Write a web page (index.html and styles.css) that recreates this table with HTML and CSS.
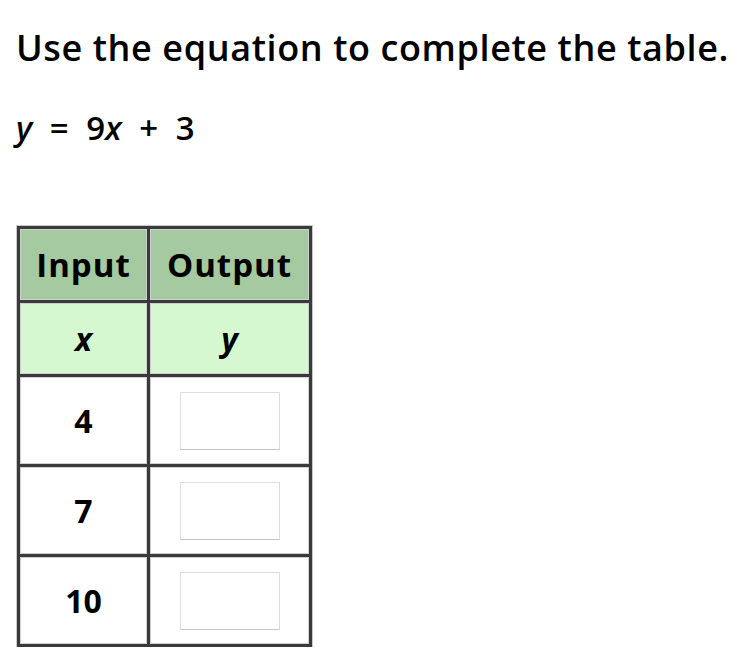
FILE: index.html
```html
<!DOCTYPE html>
<html>
<head>
<meta charset="utf-8">
<link rel="stylesheet" href="styles.css">
</head>
<body>
<div class="page">
  <p class="prompt">Use the equation to complete the table.</p>
  <p class="equation"><i>y</i> = 9<i>x</i> + 3</p>
  <table class="tbl">
    <tr class="head"><td class="c1">Input</td><td class="c2">Output</td></tr>
    <tr class="vars"><td><i>x</i></td><td><i>y</i></td></tr>
    <tr class="data"><td>4</td><td><span class="box"></span></td></tr>
    <tr class="data"><td>7</td><td><span class="box"></span></td></tr>
    <tr class="data"><td>10</td><td><span class="box"></span></td></tr>
  </table>
</div>
</body>
</html>
```
FILE: styles.css
```css
html, body {
  margin: 0;
  padding: 0;
  background: #fff;
}
.page {
  padding: 18px 16px 0 16px;
  font-family: "Open Sans", "DejaVu Sans", sans-serif;
  color: #000;
}
.prompt {
  margin: 0;
  font-size: 36px;
  font-weight: 600;
  letter-spacing: 0.6px;
  line-height: 60px;
}
.equation {
  margin: 28px 0 0 0;
  font-size: 33px;
  font-weight: 600;
  line-height: 44px;
  word-spacing: 9px;
}
.equation i {
  font-style: italic;
}
.tbl {
  margin-top: 76px;
  margin-left: 1px;
  border-collapse: collapse;
  border: 3px solid #3a3a3a;
  box-shadow: 0 0 0 1px #c9c9c9;
  font-size: 32px;
  font-weight: 700;
}
.tbl td {
  border: 3px solid #3a3a3a;
  box-shadow: inset 0 0 0 1px #cfcfcf;
  text-align: center;
  padding: 0;
}
.tbl .c1 { width: 127px; }
.tbl .c2 { width: 159px; }
.head td {
  background: #a5c9a0;
  height: 71px;
  font-size: 33px;
  letter-spacing: 1px;
}
.vars td {
  background: #d5f8d0;
  height: 71px;
}
.vars i {
  font-style: italic;
}
.data td {
  height: 87px;
  background: #fff;
}
.box {
  display: inline-block;
  width: 98px;
  height: 56px;
  border: 1px solid #dedede;
  border-bottom-color: #c4c4c4;
  vertical-align: middle;
  background: #fff;
}
```
